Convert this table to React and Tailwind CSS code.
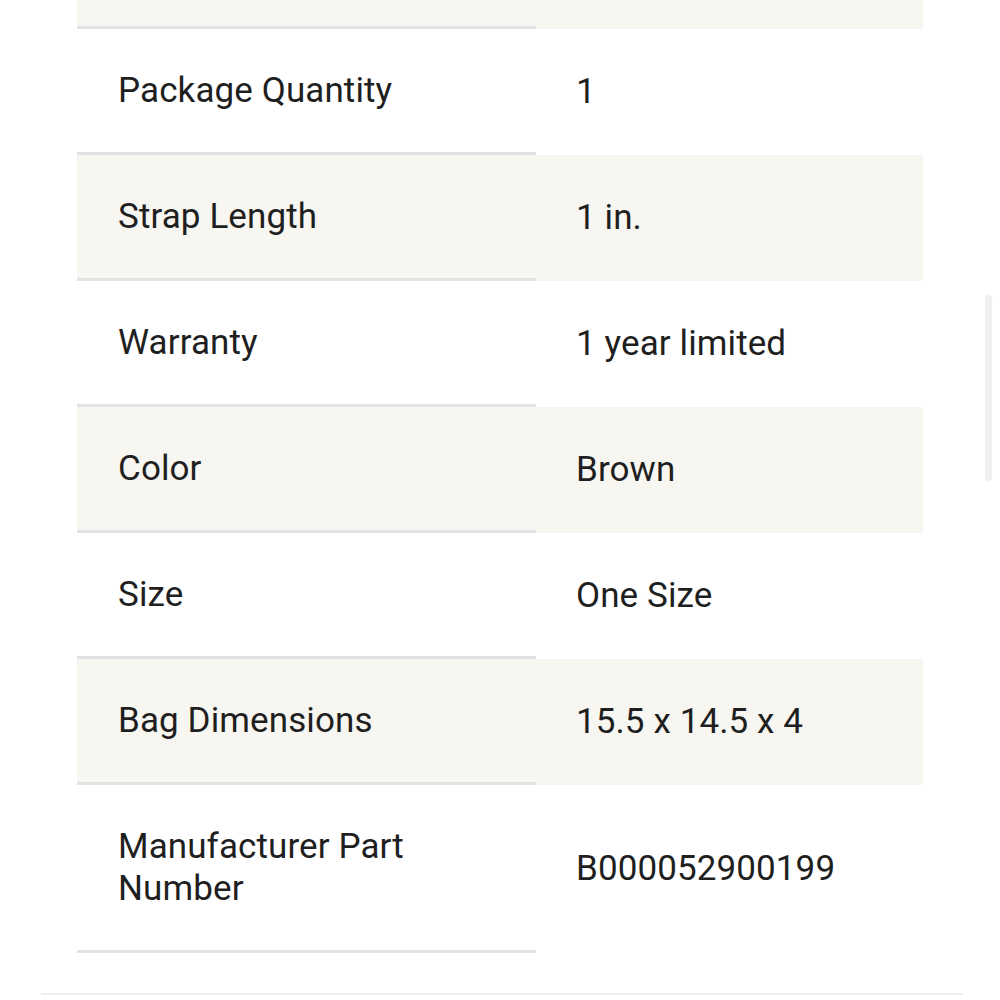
const specs = [
  { label: 'Package Quantity', value: '1' },
  { label: 'Strap Length', value: '1 in.' },
  { label: 'Warranty', value: '1 year limited' },
  { label: 'Color', value: 'Brown' },
  { label: 'Size', value: 'One Size' },
  { label: 'Bag Dimensions', value: '15.5 x 14.5 x 4' },
  { label: 'Manufacturer Part Number', value: 'B000052900199' },
];

export default function App() {
  return (
    <div
      className="relative w-[1000px] h-[1000px] overflow-hidden bg-white text-[#1f1f1f]"
      style={{ fontFamily: 'Roboto, "Noto Sans", sans-serif' }}
    >
      <div className="ml-[77px] w-[846px]">
        {/* tail of the previous row */}
        <div className="flex h-[29px] bg-[#f8f6f1]">
          <div className="w-[459px] border-b-[3px] border-[#e2e2e2]" />
          <div className="flex-1" />
        </div>

        {specs.map((row, i) => (
          <div key={row.label} className={`flex ${i % 2 === 1 ? 'bg-[#f8f6f1]' : 'bg-white'}`}>
            <div className="w-[459px] pl-[41px] pr-[40px] pt-[41px] pb-[40px] border-b-[3px] border-[#e2e2e2] text-[35px] leading-[42px] tracking-[0.1px]">
              {row.label}
            </div>
            <div className="flex-1 pl-[40px] flex items-center text-[35px] leading-[42px] pt-[1px] pb-[2px] tracking-[0.1px]">
              {row.value}
            </div>
          </div>
        ))}
      </div>

      <div className="ml-[41px] mt-[40px] w-[922px] h-[2px] bg-[#efefef]" />

      {/* scrollbar */}
      <div className="absolute left-[985px] top-[295px] w-[7px] h-[186px] rounded-full bg-[#efefef]" />
    </div>
  );
}
